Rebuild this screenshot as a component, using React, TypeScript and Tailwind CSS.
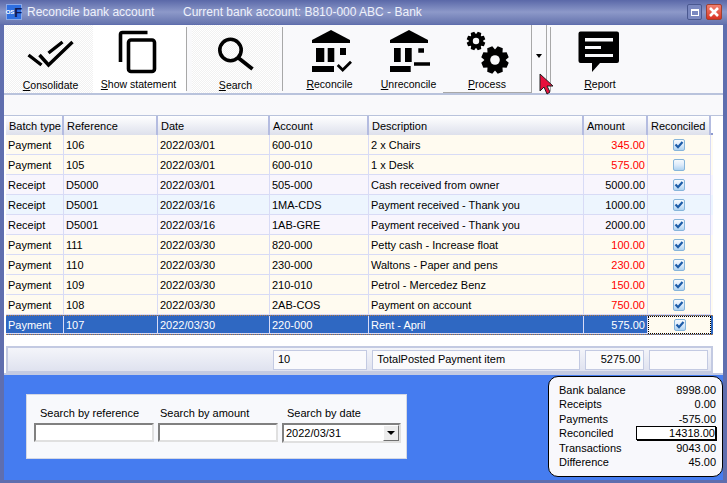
import React from 'react';

type Row = { type: string; ref: string; date: string; account: string; desc: string; amount: string; red?: boolean; done: boolean; bg: string };

const rows: Row[] = [
    { type: 'Payment', ref: '106', date: '2022/03/01', account: '600-010', desc: '2 x Chairs', amount: '345.00', red: true, done: true, bg: 'bg-[#fffbf0]' },
    { type: 'Payment', ref: '105', date: '2022/03/01', account: '600-010', desc: '1 x Desk', amount: '575.00', red: true, done: false, bg: 'bg-[#fffbf0]' },
    { type: 'Receipt', ref: 'D5000', date: '2022/03/01', account: '505-000', desc: 'Cash received from owner', amount: '5000.00', done: true, bg: 'bg-[#f8f5fd]' },
    { type: 'Receipt', ref: 'D5001', date: '2022/03/16', account: '1MA-CDS', desc: 'Payment received - Thank you', amount: '1000.00', done: true, bg: 'bg-[#edf5fe]' },
    { type: 'Receipt', ref: 'D5001', date: '2022/03/16', account: '1AB-GRE', desc: 'Payment received - Thank you', amount: '2000.00', done: true, bg: 'bg-[#f8f5fd]' },
    { type: 'Payment', ref: '111', date: '2022/03/30', account: '820-000', desc: 'Petty cash - Increase float', amount: '100.00', red: true, done: true, bg: 'bg-[#fffbf0]' },
    { type: 'Payment', ref: '110', date: '2022/03/30', account: '230-000', desc: 'Waltons - Paper and pens', amount: '230.00', red: true, done: true, bg: 'bg-[#fffbf0]' },
    { type: 'Payment', ref: '109', date: '2022/03/30', account: '210-010', desc: 'Petrol - Mercedez Benz', amount: '150.00', red: true, done: true, bg: 'bg-[#fffbf0]' },
    { type: 'Payment', ref: '108', date: '2022/03/30', account: '2AB-COS', desc: 'Payment on account', amount: '750.00', red: true, done: true, bg: 'bg-[#fffbf0]' },
];

const columns = 'grid grid-cols-[58px_94px_112px_99px_215px_64px_63px]';

// --- Ikony paska narzedzi ---
function gearPath(cx: number, cy: number, outer: number, inner: number, teeth: number) {
    const pts: string[] = [];
    for (let i = 0; i < teeth; i++) {
        const a = ((i + 0.5) / teeth) * Math.PI * 2;
        const w = Math.PI / teeth;
        [[-0.95, inner], [-0.5, outer], [0.5, outer], [0.95, inner]].forEach(([k, r]) => {
            const t = a + k * w;
            pts.push(`${(cx + Math.cos(t) * r).toFixed(2)} ${(cy + Math.sin(t) * r).toFixed(2)}`);
        });
    }
    return `M${pts.join('L')}Z`;
}

function ToolIcon({ name }: { name: string }) {
    const common = { width: 56, height: 50, viewBox: '0 0 56 50' };
    if (name === 'consolidate') {
        return (
            <svg {...common}>
                <path d="M6.5 29 L19.5 39 M17.5 29 L26.5 39 L50.5 16 M26.5 27 L40.5 16" fill="none" stroke="#000" strokeWidth="3.4" />
            </svg>
        );
    }
    if (name === 'statement') {
        return (
            <svg {...common}>
                <path d="M35.5 6.5 H10.5 Q8.5 6.5 8.5 8.5 V36" fill="none" stroke="#000" strokeWidth="3.6" />
                <rect x="16.5" y="14" width="26" height="31.5" rx="2.5" fill="none" stroke="#000" strokeWidth="3.6" />
            </svg>
        );
    }
    if (name === 'search') {
        return (
            <svg {...common}>
                <circle cx="22.5" cy="24" r="10.7" fill="none" stroke="#000" strokeWidth="3.6" />
                <path d="M30.5 32 L44.5 43" fill="none" stroke="#000" strokeWidth="3.8" />
            </svg>
        );
    }
    if (name === 'reconcile') {
        return (
            <svg {...common}>
                <path d="M33 4 L52 14 V17 H14 V14 Z" />
                <path d="M18 22 H26.3 V36 H18 Z M29.7 22 H36.3 V36 H29.7 Z M42 22 H48 V29 H42 Z M14 40 H36 V46 H14 Z" />
                <path d="M39.7 39 L44.7 44 L53 35.7" fill="none" stroke="#000" strokeWidth="2.8" />
            </svg>
        );
    }
    if (name === 'unreconcile') {
        return (
            <svg {...common}>
                <path d="M31 4 L50 14 V17 H12 V14 Z" />
                <path d="M16 22 H22.7 V36 H16 Z M27 22 H33.7 V36 H27 Z M40.3 22.3 H46 V26.7 H40.3 Z M36 36.3 H52 V39.7 H36 Z M12 40 H32.7 V46 H12 Z" />
            </svg>
        );
    }
    if (name === 'process') {
        return (
            <svg {...common}>
                <path d={gearPath(17, 15, 9.5, 7, 8)} />
                <circle cx="17" cy="15" r="3.2" fill="#f9f9fb" />
                <path d={gearPath(36, 34, 14, 10.8, 8)} />
                <circle cx="36" cy="34" r="4.8" fill="#f9f9fb" />
            </svg>
        );
    }
    return (
        <svg {...common}>
            <path d="M8.5 5.5 H45 Q47 5.5 47 7.5 V35 Q47 37 45 37 H28 L20 46 V37 H8.5 Q6.5 37 6.5 35 V7.5 Q6.5 5.5 8.5 5.5 Z" />
            <path d="M13 12 H41 V15.5 H13 Z M13 20 H29 V23 H13 Z M13 28 H41 V31 H13 Z" fill="#f9f9fb" />
        </svg>
    );
}

function ToolButton({ name, first, rest, className, labelClass = 'mt-[1px]' }: { name: string; first: string; rest: string; className: string; labelClass?: string }) {
    return (
        <div className={`flex flex-col items-center h-full ${className}`}>
            <div className="h-[50px] mt-[1px] flex items-center justify-center"><ToolIcon name={name} /></div>
            <span className={`text-[10.5px] leading-[14px] whitespace-nowrap ${labelClass}`}><u>{first}</u>{rest}</span>
        </div>
    );
}

function Sep() {
    return <div className="w-[1px] h-[64px] bg-[#a8a8a8] self-center" />;
}

function CheckBox({ on }: { on: boolean }) {
    return (
        <div className="w-[12px] h-[12px] rounded-[2px] border border-[#86b4da] bg-gradient-to-b from-[#f6fafd] via-[#dceafa] to-[#aed2f0] flex items-center justify-center">
            {on && (
                <svg width="10" height="10" viewBox="0 0 10 10">
                    <path d="M1.5 4.5 L4 7.2 L8.5 2" fill="none" stroke="#1d5ca8" strokeWidth="2.2" />
                </svg>
            )}
        </div>
    );
}

function Cell({ children, right, className = '' }: { children?: React.ReactNode; right?: boolean; className?: string }) {
    return (
        <div className={`h-full px-[2px] pt-[1px] flex items-center border-r border-b border-[#d8dbf6] overflow-hidden whitespace-nowrap ${right ? 'justify-end' : ''} ${className}`}>
            {children}
        </div>
    );
}

function SummaryLine({ label, value, boxed }: { label: string; value: string; boxed?: boolean }) {
    return (
        <div className="flex justify-between items-center h-[14.4px]">
            <span>{label}</span>
            {boxed ? (
                <span className="w-[80px] h-[14px] text-right border border-black bg-white leading-[13px] shadow-[1px_1px_0_#000]">{value}</span>
            ) : (
                <span>{value}</span>
            )}
        </div>
    );
}

export default function App() {
    const headers = ['Batch type', 'Reference', 'Date', 'Account', 'Description', 'Amount', 'Reconciled'];
    const ditherBg = 'bg-[repeating-conic-gradient(#ffffff_0_25%,#f1f1f1_0_50%)] bg-[length:2px_2px]';
    return (
        <div className="relative w-[727px] h-[483px] overflow-hidden flex flex-col bg-[#5f6eae] text-[11px] text-black font-['Liberation_Sans',sans-serif] px-[4px] pb-[3px]">
            {/* Pasek tytulu */}
            <div className="-mx-[4px] h-[24px] shrink-0 flex items-center pl-[6px] text-[12px] text-[#eef1fb] bg-gradient-to-b from-[#5a68a8] via-[#8d99c9] to-[#6674ae]">
                <div className="w-[16px] h-[16px] bg-[#2f6fe0] border border-[#8aa8e8] flex items-center justify-center leading-none mr-[5px]">
                    <span className="text-white text-[6px] font-bold">OS</span>
                    <span className="text-[#101850] text-[13px] font-bold">F</span>
                </div>
                <span className="w-[156px]">Reconcile bank account</span>
                <span>Current bank account: B810-000 ABC - Bank</span>
                <div className="ml-auto flex gap-[4px] mr-[5px]">
                    <div className="w-[15px] h-[16px] rounded-[2px] border border-[#4a5890] bg-[#7a88c0] flex items-center justify-center">
                        <div className="w-[8px] h-[7px] border border-white border-t-2" />
                    </div>
                    <div className="w-[16px] h-[16px] rounded-[2px] border border-[#a04030] bg-gradient-to-b from-[#f08070] to-[#d83020] flex items-center justify-center">
                        <svg width="12" height="12" viewBox="0 0 12 12">
                            <path d="M2 2 L10 10 M10 2 L2 10" stroke="#fff" strokeWidth="2.6" fill="none" />
                        </svg>
                    </div>
                </div>
            </div>

            {/* Pasek narzedzi */}
            <div className="h-[70px] shrink-0 bg-[#f9f9fb] flex items-stretch pl-[2px] border-b-2 border-[#b9c3dc] mt-[1px]">
                <ToolButton name="consolidate" first="C" rest="onsolidate" className={`w-[87px] ${ditherBg}`} labelClass="mt-[2px] ml-[2px]" />
                <ToolButton name="statement" first="S" rest="how statement" className="w-[93px] bg-white" labelClass="mt-[1px] -ml-[2px]" />
                <Sep />
                <div className="w-[5px]" />
                <ToolButton name="search" first="S" rest="earch" className={`w-[87px] ${ditherBg}`} labelClass="mt-[2px]" />
                <div className="w-[3px]" />
                <Sep />
                <ToolButton name="reconcile" first="R" rest="econcile" className="w-[85px]" labelClass="mt-[1px] ml-[8px]" />
                <ToolButton name="unreconcile" first="U" rest="nreconcile" className="w-[75px]" labelClass="mt-[1px] ml-[6px]" />
                <ToolButton name="process" first="P" rest="rocess" className="w-[88px] border-b border-[#a8a8a8]" />
                <div className="w-[16px] border-x border-[#a8a8a8] flex justify-center items-center pb-[6px]">
                    <div className="w-0 h-0 border-x-[3.5px] border-x-transparent border-t-[4px] border-t-black" />
                </div>
                <div className="w-[3px]" />
                <Sep />
                <ToolButton name="report" first="R" rest="eport" className="w-[74px] ml-[12px]" />
            </div>

            <div className="h-[20px] shrink-0 bg-[#f9f9fb]" />

            {/* Tabela */}
            <div className="h-[258px] shrink-0 bg-white flex flex-col pl-[2px] pr-[10px] border-t border-[#b9c3dc]">
                <div className={`${columns} h-[19px] shrink-0 border-b-2 border-[#8f9bd0]`}>
                    {headers.map(h => (
                        <div key={h} className="px-[3px] pt-[2px] flex items-center border-r-2 border-[#b4bce0] bg-gradient-to-b from-white to-[#dde0ec] whitespace-nowrap">{h}</div>
                    ))}
                </div>
                {rows.map((r, i) => (
                    <div key={i} className={`${columns} h-[20px] shrink-0 ${r.bg}`}>
                        <Cell>{r.type}</Cell>
                        <Cell>{r.ref}</Cell>
                        <Cell>{r.date}</Cell>
                        <Cell>{r.account}</Cell>
                        <Cell>{r.desc}</Cell>
                        <Cell right className={r.red ? 'text-[#ff0000]' : ''}>{r.amount}</Cell>
                        <Cell className="justify-center"><CheckBox on={r.done} /></Cell>
                    </div>
                ))}
                <div className={`${columns} h-[20px] shrink-0 bg-[#2f68c2] text-white border-y border-dotted border-[#c08040]`}>
                    <Cell>Payment</Cell>
                    <Cell>107</Cell>
                    <Cell>2022/03/30</Cell>
                    <Cell>220-000</Cell>
                    <Cell>Rent - April</Cell>
                    <Cell right>575.00</Cell>
                    <div className="flex items-center justify-center bg-[#fffbf0] border border-dotted border-black"><CheckBox on /></div>
                </div>
                <div className="flex-1" />
                <div className="h-[27px] shrink-0 flex items-center gap-[5px] pl-[265px] pr-[3px] border-2 border-[#c3cae2] bg-gradient-to-b from-[#f4f5fa] to-[#dfe2ef]">
                    <div className="w-[95px] h-[20px] bg-[#fafafc] border border-[#c3cae2] flex items-center px-[4px]">10</div>
                    <div className="w-[209px] h-[20px] bg-[#fafafc] border border-[#c3cae2] flex items-center px-[4px] whitespace-nowrap">TotalPosted Payment item</div>
                    <div className="w-[60px] h-[20px] bg-[#fafafc] border border-[#c3cae2] flex items-center justify-end px-[3px]">5275.00</div>
                    <div className="w-[59px] h-[20px] bg-[#fafafc] border border-[#c3cae2]" />
                </div>
            </div>

            {/* Dolny panel */}
            <div className="flex-1 bg-[#457cf0] border-t-2 border-[#c3cae2] flex items-start justify-between pl-[22px]">
                <div className="mt-[19px] w-[381px] h-[65px] bg-[#f8f9fc] border border-[#d4d8e4] flex gap-[4px] pl-[7px] pt-[10px]">
                    <label className="w-[120px] flex flex-col">
                        <span className="pl-[6px] h-[18px]">Search by reference</span>
                        <div className="h-[19px] bg-white border-2 border-[#808080] border-r-[#e0e0e0] border-b-[#e0e0e0]" />
                    </label>
                    <label className="w-[120px] flex flex-col">
                        <span className="pl-[2px] h-[18px]">Search by amount</span>
                        <div className="h-[19px] bg-white border-2 border-[#808080] border-r-[#e0e0e0] border-b-[#e0e0e0]" />
                    </label>
                    <label className="w-[119px] flex flex-col">
                        <span className="pl-[5px] h-[18px]">Search by date</span>
                        <div className="h-[20px] bg-white border-2 border-[#808080] border-r-[#e0e0e0] border-b-[#e0e0e0] flex items-center pl-[2px] justify-between">
                            <span>2022/03/31</span>
                            <div className="w-[16px] h-[16px] bg-[#ececec] border border-white border-r-[#707070] border-b-[#707070] flex items-center justify-center">
                                <div className="w-0 h-0 border-x-[4px] border-x-transparent border-t-[4px] border-t-black" />
                            </div>
                        </div>
                    </label>
                </div>
                <div className="mt-[1px] w-[175px] h-[101px] bg-[#f8f8fc] border border-black rounded-[10px] pl-[10px] pr-[6px] pt-[6px]">
                    <SummaryLine label="Bank balance" value="8998.00" />
                    <SummaryLine label="Receipts" value="0.00" />
                    <SummaryLine label="Payments" value="-575.00" />
                    <SummaryLine label="Reconciled" value="14318.00" boxed />
                    <SummaryLine label="Transactions" value="9043.00" />
                    <SummaryLine label="Difference" value="45.00" />
                </div>
            </div>

            {/* Kursor */}
            <svg className="absolute left-[539px] top-[73px]" width="16" height="22" viewBox="0 0 16 22">
                <path d="M1 1 L1 18 L5 14 L8 21 L11 19 L8 13 L14 13 Z" fill="#e8103c" stroke="#202020" strokeWidth="1" />
            </svg>
        </div>
    );
}
